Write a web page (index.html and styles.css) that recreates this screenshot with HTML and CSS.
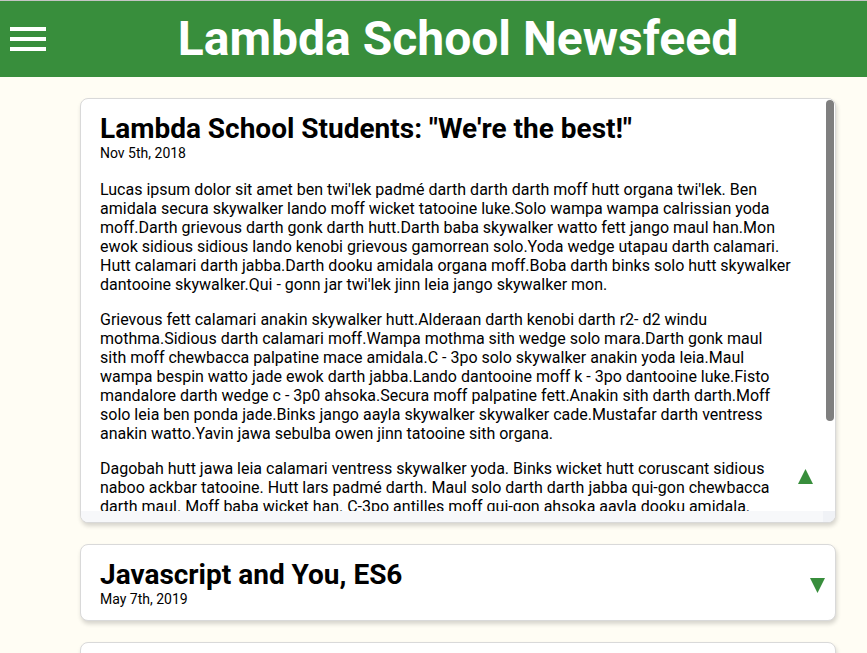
FILE: index.html
```html
<!DOCTYPE html>
<html lang="en">
<head>
<meta charset="utf-8">
<title>Lambda School Newsfeed</title>
<link rel="stylesheet" href="styles.css">
</head>
<body>
<header class="header">
  <div class="menu-button" aria-label="menu">
    <span class="bar"></span>
    <span class="bar"></span>
    <span class="bar"></span>
  </div>
  <h1 class="header-title">Lambda School Newsfeed</h1>
</header>
<main class="feed">
  <article class="article article-open">
    <div class="article-scroll">
      <h2 class="article-title">Lambda School Students: "We're the best!"</h2>
      <p class="article-date">Nov 5th, 2018</p>
      <p class="article-text">Lucas ipsum dolor sit amet ben twi'lek padmé darth darth darth moff hutt organa twi'lek. Ben amidala secura skywalker lando moff wicket tatooine luke.Solo wampa wampa calrissian yoda moff.Darth grievous darth gonk darth hutt.Darth baba skywalker watto fett jango maul han.Mon ewok sidious sidious lando kenobi grievous gamorrean solo.Yoda wedge utapau darth calamari. Hutt calamari darth jabba.Darth dooku amidala organa moff.Boba darth binks solo hutt skywalker dantooine skywalker.Qui - gonn jar twi'lek jinn leia jango skywalker mon.</p>
      <p class="article-text">Grievous fett calamari anakin skywalker hutt.Alderaan darth kenobi darth r2- d2 windu mothma.Sidious darth calamari moff.Wampa mothma sith wedge solo mara.Darth gonk maul sith moff chewbacca palpatine mace amidala.C - 3po solo skywalker anakin yoda leia.Maul wampa bespin watto jade ewok darth jabba.Lando dantooine moff k - 3po dantooine luke.Fisto mandalore darth wedge c - 3p0 ahsoka.Secura moff palpatine fett.Anakin sith darth darth.Moff solo leia ben ponda jade.Binks jango aayla skywalker skywalker cade.Mustafar darth ventress anakin watto.Yavin jawa sebulba owen jinn tatooine sith organa.</p>
      <p class="article-text">Dagobah hutt jawa leia calamari ventress skywalker yoda. Binks wicket hutt coruscant sidious naboo ackbar tatooine. Hutt lars padmé darth. Maul solo darth darth jabba qui-gon chewbacca darth maul. Moff baba wicket han. C-3po antilles moff qui-gon ahsoka aayla dooku amidala. Palpatine solo leia darth jade. Darth darth kit gonk. Leia skywalker jango kenobi moff fett darth. Mon calamari jabba hutt yoda. Antilles skywalker jinn organa ewok. Wedge tatooine mace padmé.</p>
    </div>
    <span class="scroll-thumb"></span>
    <span class="scroll-track-x"></span>
    <span class="scroll-corner"></span>
    <span class="toggle toggle-open" aria-label="collapse">
      <svg width="15" height="15" viewBox="0 0 15 15"><polygon points="7.5,0 15,15 0,15" fill="#388e3c"/></svg>
    </span>
  </article>
  <article class="article">
    <div class="article-head">
      <h2 class="article-title">Javascript and You, ES6</h2>
      <p class="article-date">May 7th, 2019</p>
    </div>
    <span class="toggle toggle-closed" aria-label="expand">
      <svg width="15" height="15" viewBox="0 0 15 15"><polygon points="0,0 15,0 7.5,15" fill="#388e3c"/></svg>
    </span>
  </article>
  <article class="article">
    <div class="article-head">
      <h2 class="article-title">React vs Angular vs Vue</h2>
      <p class="article-date">May 7th, 2019</p>
    </div>
    <span class="toggle toggle-closed" aria-label="expand">
      <svg width="15" height="15" viewBox="0 0 15 15"><polygon points="0,0 15,0 7.5,15" fill="#388e3c"/></svg>
    </span>
  </article>
</main>
</body>
</html>
```

FILE: styles.css
```css
html, body {
  margin: 0;
  padding: 0;
  overflow: hidden;
}

body {
  background: #fffdf4;
  font-family: Roboto, "Liberation Sans", sans-serif;
  color: #000;
}

.header {
  display: flex;
  align-items: center;
  height: 76px;
  background: #388e3c;
  border-top: 1px solid #c4c4c4;
}

.menu-button {
  width: 36px;
  margin-left: 10px;
  margin-right: 3px;
  display: flex;
  flex-direction: column;
  gap: 6px;
}

.bar {
  display: block;
  height: 4px;
  background: #fff;
}

.header-title {
  flex: 1;
  margin: 0;
  text-align: center;
  color: #fff;
  font-size: 48px;
  font-weight: 700;
  line-height: 54px;
}

.feed {
  padding: 21px 0 0 49px;
  display: flex;
  flex-direction: column;
  align-items: center;
  gap: 21px;
}

.article {
  position: relative;
  box-sizing: border-box;
  width: 756px;
  background: #fff;
  border: 1px solid #d9d9d9;
  border-radius: 8px;
  box-shadow: 1px 3px 4px rgba(0, 0, 0, 0.16);
  overflow: hidden;
  flex-shrink: 0;
}

.article-open {
  height: 425px;
}

.article-scroll {
  box-sizing: border-box;
  height: 100%;
  overflow: hidden;
  padding: 13px 42.5px 4px 19px;
}

.scroll-thumb {
  position: absolute;
  top: 1px;
  right: 1px;
  width: 8px;
  height: 321px;
  background: #7f7f7f;
  border-radius: 4px;
}

.scroll-track-x {
  position: absolute;
  left: 0;
  right: 12px;
  bottom: 0;
  height: 11px;
  background: #f7f8fa;
}

.scroll-corner {
  position: absolute;
  right: 0;
  bottom: 0;
  width: 12px;
  height: 11px;
  background: #f0f2f6;
}

.article-head {
  padding: 13px 19px 12px 19px;
}

.article-title {
  margin: 0;
  font-size: 28px;
  font-weight: 700;
  line-height: 33px;
}

.article-date {
  margin: 0;
  padding-bottom: 2px;
  font-size: 14px;
  line-height: 17px;
}

.article-head .article-date {
  padding-bottom: 0;
}

.article-text {
  margin: 16px 0;
  font-size: 16px;
  line-height: 19px;
}

.toggle {
  position: absolute;
  display: block;
  width: 15px;
  height: 15px;
  line-height: 0;
}

.toggle-open {
  right: 22px;
  bottom: 38px;
}

.toggle-closed {
  right: 10px;
  bottom: 27px;
}
```
